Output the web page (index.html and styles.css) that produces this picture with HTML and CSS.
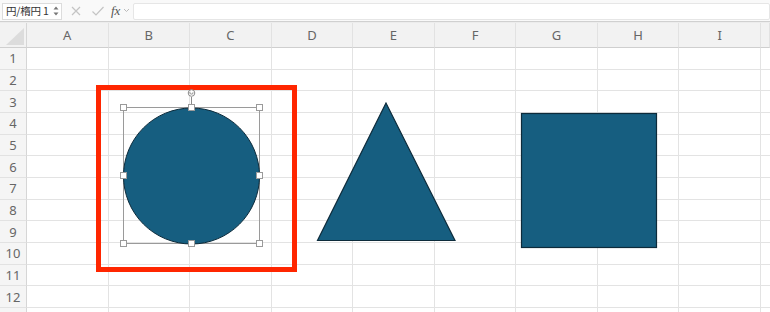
FILE: index.html
```html
<!DOCTYPE html>
<html lang="ja">
<head>
<meta charset="utf-8">
<link rel="stylesheet" href="styles.css">
</head>
<body>
<div class="page">
  <div class="fbar">
    <div class="namebox">
      <span class="name">円/楕円 1</span>
      <svg class="spin" width="6" height="12" viewBox="0 0 6 12"><path d="M0.5 4.5 L3 1.5 L5.5 4.5Z M0.5 7.5 L3 10.5 L5.5 7.5Z" fill="#777"/></svg>
    </div>
    <svg class="ico" width="12" height="12" viewBox="0 0 12 12"><path d="M2 2 L10 10 M10 2 L2 10" stroke="#c4c4c4" stroke-width="1.2" fill="none"/></svg>
    <svg class="ico" width="14" height="12" viewBox="0 0 14 12"><path d="M1.5 6.5 L5 10 L12.5 2" stroke="#c4c4c4" stroke-width="1.2" fill="none"/></svg>
    <span class="fx">fx</span>
    <svg class="chev" width="7" height="5" viewBox="0 0 7 5"><path d="M1 1 L3.5 3.5 L6 1" stroke="#bbb" fill="none"/></svg>
    <div class="input"></div>
  </div>
  <div class="sheet">
    <div class="corner"><svg width="20" height="18" viewBox="0 0 20 18"><path d="M19 0 L19 17 L1 17Z" fill="#dcdcdc"/></svg></div>
    <div class="ch">A</div><div class="ch">B</div><div class="ch">C</div><div class="ch">D</div><div class="ch">E</div><div class="ch">F</div><div class="ch">G</div><div class="ch">H</div><div class="ch">I</div><div class="ch"></div>
    <div class="rh">1</div><div class="cell"></div><div class="cell"></div><div class="cell"></div><div class="cell"></div><div class="cell"></div><div class="cell"></div><div class="cell"></div><div class="cell"></div><div class="cell"></div><div class="cell last"></div>
    <div class="rh">2</div><div class="cell"></div><div class="cell"></div><div class="cell"></div><div class="cell"></div><div class="cell"></div><div class="cell"></div><div class="cell"></div><div class="cell"></div><div class="cell"></div><div class="cell last"></div>
    <div class="rh">3</div><div class="cell"></div><div class="cell"></div><div class="cell"></div><div class="cell"></div><div class="cell"></div><div class="cell"></div><div class="cell"></div><div class="cell"></div><div class="cell"></div><div class="cell last"></div>
    <div class="rh">4</div><div class="cell"></div><div class="cell"></div><div class="cell"></div><div class="cell"></div><div class="cell"></div><div class="cell"></div><div class="cell"></div><div class="cell"></div><div class="cell"></div><div class="cell last"></div>
    <div class="rh">5</div><div class="cell"></div><div class="cell"></div><div class="cell"></div><div class="cell"></div><div class="cell"></div><div class="cell"></div><div class="cell"></div><div class="cell"></div><div class="cell"></div><div class="cell last"></div>
    <div class="rh">6</div><div class="cell"></div><div class="cell"></div><div class="cell"></div><div class="cell"></div><div class="cell"></div><div class="cell"></div><div class="cell"></div><div class="cell"></div><div class="cell"></div><div class="cell last"></div>
    <div class="rh">7</div><div class="cell"></div><div class="cell"></div><div class="cell"></div><div class="cell"></div><div class="cell"></div><div class="cell"></div><div class="cell"></div><div class="cell"></div><div class="cell"></div><div class="cell last"></div>
    <div class="rh">8</div><div class="cell"></div><div class="cell"></div><div class="cell"></div><div class="cell"></div><div class="cell"></div><div class="cell"></div><div class="cell"></div><div class="cell"></div><div class="cell"></div><div class="cell last"></div>
    <div class="rh">9</div><div class="cell"></div><div class="cell"></div><div class="cell"></div><div class="cell"></div><div class="cell"></div><div class="cell"></div><div class="cell"></div><div class="cell"></div><div class="cell"></div><div class="cell last"></div>
    <div class="rh">10</div><div class="cell"></div><div class="cell"></div><div class="cell"></div><div class="cell"></div><div class="cell"></div><div class="cell"></div><div class="cell"></div><div class="cell"></div><div class="cell"></div><div class="cell last"></div>
    <div class="rh">11</div><div class="cell"></div><div class="cell"></div><div class="cell"></div><div class="cell"></div><div class="cell"></div><div class="cell"></div><div class="cell"></div><div class="cell"></div><div class="cell"></div><div class="cell last"></div>
    <div class="rh">12</div><div class="cell"></div><div class="cell"></div><div class="cell"></div><div class="cell"></div><div class="cell"></div><div class="cell"></div><div class="cell"></div><div class="cell"></div><div class="cell"></div><div class="cell last"></div>
    <div class="rh"></div><div class="cell"></div><div class="cell"></div><div class="cell"></div><div class="cell"></div><div class="cell"></div><div class="cell"></div><div class="cell"></div><div class="cell"></div><div class="cell"></div><div class="cell last"></div>
  </div>
  <svg class="shapes" width="770" height="312" viewBox="0 0 770 312">
    <rect x="98.5" y="87.5" width="196" height="182" fill="none" stroke="#ff2600" stroke-width="5"/>
    <rect x="123.5" y="107.5" width="136" height="136" fill="none" stroke="#9a9a9a" stroke-width="1"/>
    <line x1="191.5" y1="97" x2="191.5" y2="107" stroke="#8a8a8a" stroke-width="1"/>
    <circle cx="191.5" cy="93" r="3.3" fill="#fff" stroke="#8a8a8a" stroke-width="1"/>
    <path d="M190 91.8 a1.6 1.6 0 1 0 3 0.5" fill="none" stroke="#777" stroke-width="0.8"/>
    <circle cx="191.5" cy="176" r="68" fill="#165e80" stroke="#0d2b3b" stroke-width="1"/>
    <polygon points="386,103 317.5,240.5 455,240.5" fill="#165e80" stroke="#0d2b3b" stroke-width="1.2" stroke-linejoin="miter"/>
    <rect x="521.5" y="113.5" width="135" height="134" fill="#165e80" stroke="#0d2b3b" stroke-width="1.2"/>
    <g fill="#fff" stroke="#9a9a9a" stroke-width="1">
      <rect x="120.5" y="104.5" width="6" height="6"/>
      <rect x="188.5" y="104.5" width="6" height="6"/>
      <rect x="256.5" y="104.5" width="6" height="6"/>
      <rect x="120.5" y="172.5" width="6" height="6"/>
      <rect x="256.5" y="172.5" width="6" height="6"/>
      <rect x="120.5" y="240.5" width="6" height="6"/>
      <rect x="188.5" y="240.5" width="6" height="6"/>
      <rect x="256.5" y="240.5" width="6" height="6"/>
    </g>
  </svg>
</div>
</body>
</html>
```
FILE: styles.css
```css
html, body { margin: 0; padding: 0; background: #fff; }
.page { position: relative; width: 770px; height: 312px; overflow: hidden; font-family: "Noto Sans", "Liberation Sans", "Noto Sans CJK JP", sans-serif; }
.fbar { height: 22px; box-sizing: border-box; background: #f9f9f9; border-bottom: 1px solid #d0d0d0; box-shadow: 0 1px 0 #ececec; display: flex; align-items: center; padding-left: 2px; }
.namebox { width: 60px; height: 17px; box-sizing: border-box; border: 1px solid #dcdcdc; background: #fff; display: flex; align-items: center; justify-content: space-between; padding: 0 2px 0 3px; margin-top: 1px; }
.name { font-family: "Noto Sans CJK JP", sans-serif; font-size: 10.5px; color: #333; line-height: 1; white-space: pre; letter-spacing: -0.2px; }
.ico { margin-left: 8px; }
.ico + .ico { margin-left: 9px; }
.fx { font-family: "Liberation Serif", serif; font-style: italic; font-size: 13px; color: #555; margin-left: 6px; line-height: 1; }
.chev { margin-left: 3px; }
.input { flex: 1; height: 15px; margin-left: 3px; margin-top: 2px; background: #fff; border: 1px solid #e6e6e6; border-radius: 2px; }
.sheet { display: grid; grid-template-columns: 27px repeat(9, 81.55px) 1fr; grid-template-rows: 25px repeat(13, 21.67px); margin-top: 1px; }
.corner { background: #f2f2f2; border-right: 1px solid #d6d6d6; border-bottom: 1px solid #cfcfcf; box-sizing: border-box; display: flex; align-items: flex-end; justify-content: flex-end; padding: 0 1px 1px 0; }
.ch { background: #f2f2f2; border-right: 1px solid #e2e2e2; border-bottom: 1px solid #cfcfcf; box-sizing: border-box; display: flex; align-items: center; justify-content: center; font-size: 13px; color: #666; }
.rh { background: #f5f5f5; border-right: 1px solid #d6d6d6; border-bottom: 1px solid #e2e2e2; box-sizing: border-box; display: flex; align-items: center; justify-content: center; font-size: 13px; color: #666; }
.cell { border-right: 1px solid #e3e3e3; border-bottom: 1px solid #e3e3e3; box-sizing: border-box; }
.cell.last { border-right: none; }
.shapes { position: absolute; left: 0; top: 0; }
```
